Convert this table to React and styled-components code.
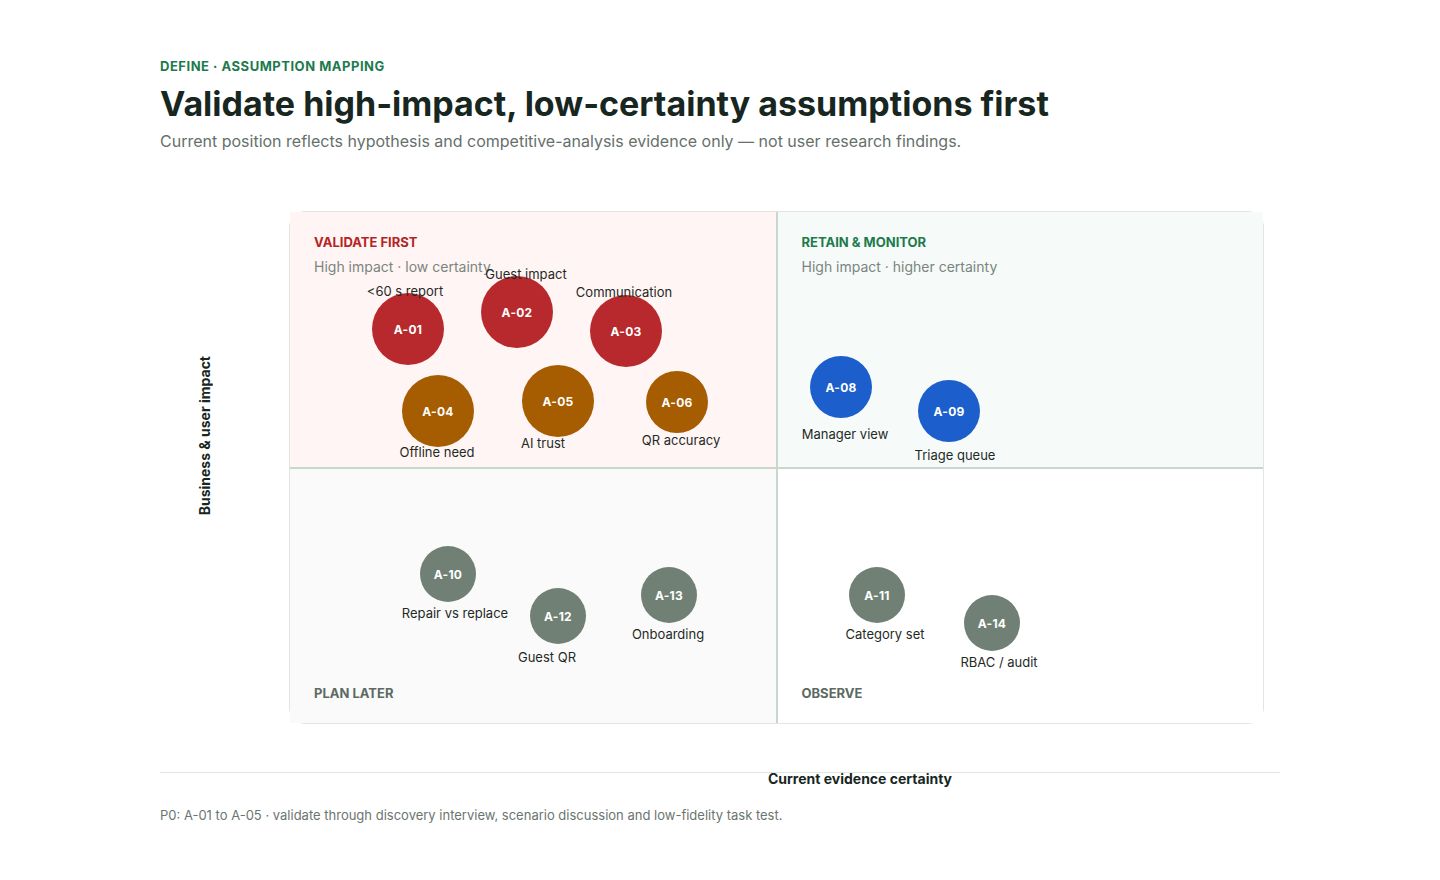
import React from 'react';
import styled, { createGlobalStyle } from 'styled-components';

const GlobalStyle = createGlobalStyle`
    html, body {
        margin: 0;
        padding: 0;
        background: #ffffff;
    }
    body {
        font-family: Inter, "Liberation Sans", Arial, sans-serif;
        color: #17261f;
        -webkit-font-smoothing: antialiased;
    }
`

const Page = styled.main`
    width: 1120px;
    margin: 0 auto;
    padding-top: 58px;
`

const Eyebrow = styled.div`
    font-size: 13px;
    line-height: 16px;
    font-weight: 700;
    letter-spacing: 0.04em;
    color: #1d7a4d;
    text-transform: uppercase;
`

const Title = styled.h1`
    margin: 8px 0 0;
    font-size: 34px;
    line-height: 44px;
    font-weight: 700;
    color: #17261f;
`

const Subtitle = styled.p`
    margin: 4px 0 0;
    font-size: 16px;
    line-height: 22px;
    color: #66706b;
`

const MatrixArea = styled.section`
    display: grid;
    grid-template-columns: 129px 975px;
    margin-top: 59px;
`

const YAxis = styled.div`
    display: flex;
    align-items: center;
    justify-content: flex-start;
    padding-left: 36px;
    padding-bottom: 64px;
`

const YLabel = styled.span`
    writing-mode: vertical-rl;
    transform: rotate(180deg);
    font-size: 14px;
    line-height: 17px;
    font-weight: 700;
    color: #17261f;
`

const Chart = styled.div`
    position: relative;
    height: 513px;
    box-sizing: border-box;
    border: 1px solid #e1e6e4;
    border-radius: 16px;
    background: #c9d8ce;
    display: grid;
    grid-template-columns: 1fr 1fr;
    grid-template-rows: 1fr 1fr;
    gap: 2px;
`

const quadBg = {
    validate: '#fff5f4',
    retain: '#f6faf9',
    later: '#fafafa',
    observe: '#ffffff',
}

const quadInk = {
    validate: '#b42426',
    retain: '#1d7a4d',
    later: '#5d6963',
    observe: '#5d6963',
}

const Quadrant = styled.div`
    background: ${p => quadBg[p.$kind]};
    padding: 22px 24px;
    display: flex;
    flex-direction: column;
    justify-content: ${p => (p.$bottom ? 'flex-end' : 'flex-start')};
`

const QuadTitle = styled.div`
    font-size: 13px;
    line-height: 16px;
    font-weight: 700;
    text-transform: uppercase;
    color: ${p => quadInk[p.$kind]};
`

const QuadNote = styled.div`
    margin-top: 7px;
    font-size: 14px;
    line-height: 20px;
    color: #7b857f;
`

const Plot = styled.div`
    position: absolute;
    inset: 0;
    pointer-events: none;
`

const tone = {
    red: '#b8292e',
    amber: '#a65c00',
    blue: '#1c5fcc',
    slate: '#718075',
}

const Bubble = styled.div`
    position: absolute;
    left: ${p => p.$x - p.$d / 2}px;
    top: ${p => p.$y - p.$d / 2}px;
    width: ${p => p.$d}px;
    height: ${p => p.$d}px;
    border-radius: 50%;
    background: ${p => tone[p.$tone]};
    display: flex;
    align-items: center;
    justify-content: center;
    color: #ffffff;
    font-size: 12px;
    font-weight: 700;
    letter-spacing: 0.02em;
`

const PointLabel = styled.span`
    position: absolute;
    left: ${p => p.$x}px;
    top: ${p => p.$y}px;
    transform: translate(-50%, -50%);
    white-space: nowrap;
    font-size: 13px;
    line-height: 16px;
    color: #1f2a25;
`

const XAxis = styled.div`
    border-top: 1px solid #dfe5e2;
    margin-top: 48px;
    display: flex;
    justify-content: center;
    padding-left: 280px;
`

const XLabel = styled.span`
    font-size: 14px;
    line-height: 12px;
    font-weight: 700;
    color: #17261f;
`

const Note = styled.p`
    margin: 22px 0 0;
    font-size: 13px;
    line-height: 16px;
    color: #6b7570;
`

// page coordinates of each point, shifted into the chart's own frame below
const points = [
    { id: 'A-01', tone: 'red', x: 408, y: 329, d: 72, label: '<60 s report', lx: 405, ly: 291 },
    { id: 'A-02', tone: 'red', x: 517, y: 312, d: 72, label: 'Guest impact', lx: 526, ly: 274 },
    { id: 'A-03', tone: 'red', x: 626, y: 331, d: 72, label: 'Communication', lx: 624, ly: 292 },
    { id: 'A-04', tone: 'amber', x: 438, y: 411, d: 72, label: 'Offline need', lx: 437, ly: 452 },
    { id: 'A-05', tone: 'amber', x: 558, y: 401, d: 72, label: 'AI trust', lx: 543, ly: 443 },
    { id: 'A-06', tone: 'amber', x: 677, y: 402, d: 62, label: 'QR accuracy', lx: 681, ly: 440 },
    { id: 'A-08', tone: 'blue', x: 841, y: 387, d: 62, label: 'Manager view', lx: 845, ly: 434 },
    { id: 'A-09', tone: 'blue', x: 949, y: 411, d: 62, label: 'Triage queue', lx: 955, ly: 455 },
    { id: 'A-10', tone: 'slate', x: 448, y: 574, d: 56, label: 'Repair vs replace', lx: 455, ly: 613 },
    { id: 'A-12', tone: 'slate', x: 558, y: 616, d: 56, label: 'Guest QR', lx: 547, ly: 657 },
    { id: 'A-13', tone: 'slate', x: 669, y: 595, d: 56, label: 'Onboarding', lx: 668, ly: 634 },
    { id: 'A-11', tone: 'slate', x: 877, y: 595, d: 56, label: 'Category set', lx: 885, ly: 634 },
    { id: 'A-14', tone: 'slate', x: 992, y: 623, d: 56, label: 'RBAC / audit', lx: 999, ly: 662 },
];

const OX = 290;
const OY = 212;

const App = () => {
    return (
        <>
            <GlobalStyle />
            <Page>
                <Eyebrow>Define · Assumption mapping</Eyebrow>
                <Title>Validate high-impact, low-certainty assumptions first</Title>
                <Subtitle>
                    Current position reflects hypothesis and competitive-analysis evidence only — not user research findings.
                </Subtitle>

                <MatrixArea>
                    <YAxis>
                        <YLabel>Business &amp; user impact</YLabel>
                    </YAxis>
                    <Chart>
                        <Quadrant $kind='validate'>
                            <QuadTitle $kind='validate'>Validate first</QuadTitle>
                            <QuadNote>High impact · low certainty</QuadNote>
                        </Quadrant>
                        <Quadrant $kind='retain'>
                            <QuadTitle $kind='retain'>Retain &amp; monitor</QuadTitle>
                            <QuadNote>High impact · higher certainty</QuadNote>
                        </Quadrant>
                        <Quadrant $kind='later' $bottom>
                            <QuadTitle $kind='later'>Plan later</QuadTitle>
                        </Quadrant>
                        <Quadrant $kind='observe' $bottom>
                            <QuadTitle $kind='observe'>Observe</QuadTitle>
                        </Quadrant>

                        <Plot>
                            {points.map(pt => (
                                <React.Fragment key={pt.id}>
                                    <Bubble $tone={pt.tone} $x={pt.x - OX} $y={pt.y - OY} $d={pt.d}>
                                        {pt.id}
                                    </Bubble>
                                    <PointLabel $x={pt.lx - OX} $y={pt.ly - OY}>{pt.label}</PointLabel>
                                </React.Fragment>
                            ))}
                        </Plot>
                    </Chart>
                </MatrixArea>

                <XAxis>
                    <XLabel>Current evidence certainty</XLabel>
                </XAxis>

                <Note>P0: A-01 to A-05 · validate through discovery interview, scenario discussion and low-fidelity task test.</Note>
            </Page>
        </>
    );
}

export default App;
